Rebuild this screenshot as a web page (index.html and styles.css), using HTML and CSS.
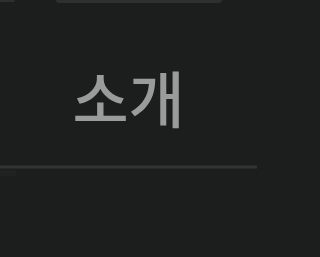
FILE: index.html
```html
<!DOCTYPE html>
<html lang="ko">
<head>
<meta charset="utf-8">
<link rel="stylesheet" href="styles.css">
</head>
<body>
<div class="page">
  <div class="topbar">
    <div class="tab tab-left"></div>
    <div class="tab tab-main"></div>
  </div>
  <div class="hero">
    <h1 class="title">소개</h1>
  </div>
  <div class="divider"></div>
  <div class="below">
    <div class="below-mark"></div>
  </div>
</div>
</body>
</html>
```
FILE: styles.css
```css
html, body {
  margin: 0;
  padding: 0;
  background: #1c1e1e;
}
.page {
  width: 257px;
  height: 257px;
  overflow: hidden;
  display: flex;
  flex-direction: column;
}
.topbar {
  display: flex;
  height: 3px;
}
.tab {
  background: #2e3030;
  height: 3px;
  border-radius: 0 0 4px 4px;
}
.tab-left {
  width: 15px;
  height: 2px;
  border-radius: 0 0 3px 0;
}
.tab-main {
  margin-left: 41px;
  width: 166px;
}
.hero {
  height: 163px;
  box-sizing: border-box;
  padding-top: 24px;
  display: flex;
  align-items: center;
  justify-content: center;
}
.title {
  margin: 0;
  font-family: "Noto Sans CJK KR", "Noto Sans", sans-serif;
  font-weight: 500;
  font-size: 61px;
  line-height: 1;
  color: #9b9b9b;
}
.divider {
  height: 2px;
  background: #323434;
  box-shadow: 0 -1px 0 #272929, 0 1px 0 #272929;
}
.below {
  flex: 1;
  padding-top: 2px;
}
.below-mark {
  width: 16px;
  height: 6px;
  background: #202222;
}
```
